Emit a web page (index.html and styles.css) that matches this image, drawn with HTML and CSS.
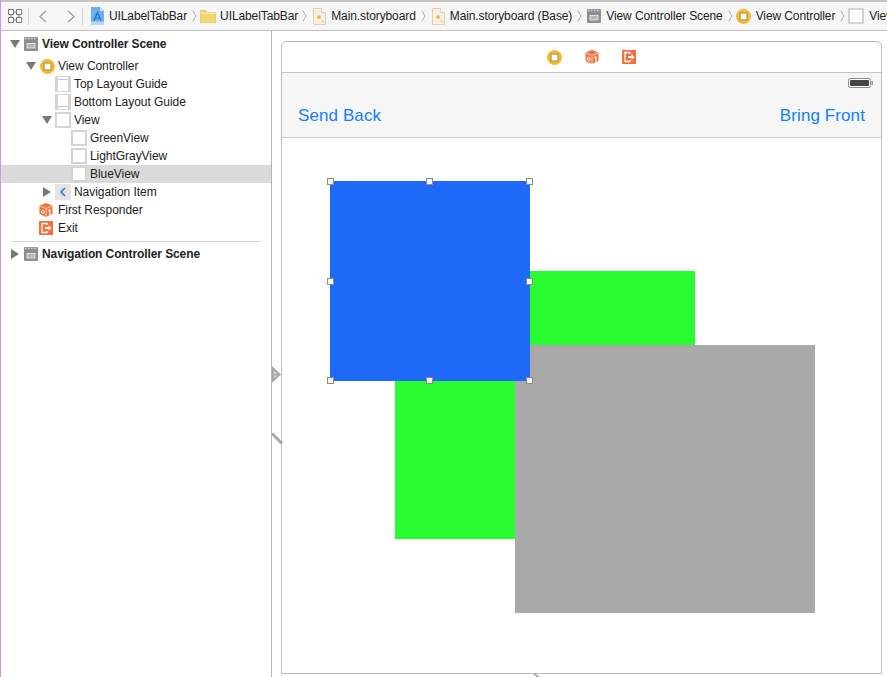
FILE: index.html
```html
<!DOCTYPE html>
<html lang="en">
<head>
    <meta charset="UTF-8">
    <title>Main.storyboard</title>
    <link rel="stylesheet" href="styles.css">
</head>
<body>

    <svg class="defs" width="0" height="0">
        <symbol id="i-scene" viewBox="0 0 14 14">
            <rect x="0" y="0" width="14" height="14" rx="1" fill="#8e8e8e"/>
            <path d="M1 1.500h1.500M4 1.500h1.500M7 1.500h1.500M10 1.500h1.500" stroke="#d8d8d8" stroke-width="1.400"/>
            <rect x="3" y="6.500" width="8" height="4.500" fill="#b5b5b5" stroke="#eee" stroke-width=".8"/>
        </symbol>
        <symbol id="i-vc" viewBox="0 0 14 14">
            <circle cx="7" cy="7" r="7" fill="#f5bb2c"/>
            <rect x="3.800" y="3.800" width="6.400" height="6.400" fill="#fff" stroke="#9c8a55" stroke-width=".9"/>
        </symbol>
        <symbol id="i-view" viewBox="0 0 16 16">
            <rect x="0" y="0" width="16" height="16" fill="#d4d4d4"/>
            <rect x="2" y="2" width="12" height="12" fill="#fff"/>
        </symbol>
        <symbol id="i-top" viewBox="0 0 16 16">
            <rect x="0" y="0" width="16" height="16" fill="#d4d4d4"/>
            <rect x="3" y="1" width="10" height="14" fill="#fff"/>
            <rect x="3" y="3" width="10" height="1" fill="#b8c4dc"/>
        </symbol>
        <symbol id="i-bottom" viewBox="0 0 16 16">
            <rect x="0" y="0" width="16" height="16" fill="#d4d4d4"/>
            <rect x="3" y="1" width="10" height="14" fill="#fff"/>
            <rect x="3" y="12" width="10" height="1" fill="#b8c4dc"/>
        </symbol>
        <symbol id="i-cube" viewBox="0 0 14 14">
            <path d="M7 0l6.500 2.500v8.500l-6.500 3-6.500-3v-8.500z" fill="#f4733c"/>
            <path d="M.5 2.800l6.500 2.700 6.500-2.700M7 5.500v8.500" stroke="#fcd5c2" stroke-width="1" fill="none"/>
            <path d="M9 7.800l1.800-.9v5" stroke="#fff" stroke-width="1.200" fill="none"/>
            <circle cx="3.800" cy="8.900" r="1.500" fill="none" stroke="#fff" stroke-width="1"/>
        </symbol>
        <symbol id="i-exit" viewBox="0 0 14 14">
            <rect width="14" height="14" fill="#f5703c"/>
            <path d="M8 4V2.500H3v9h5V10" fill="none" stroke="#fff" stroke-width="1.300"/>
            <path d="M6 6h3.500V4.200L12.500 7l-3 2.800V8H6z" fill="#fff"/>
        </symbol>
        <symbol id="i-file" viewBox="0 0 13 17">
            <path d="M.5.500h8l4 4v12H.5z" fill="#f6efe2" stroke="#dccfb8"/>
            <path d="M8.500.500v4h4" fill="#fff" stroke="#dccfb8"/>
            <circle cx="6" cy="9" r="1.800" fill="#eeb32a"/>
            <path d="M9 12.500l2 2" stroke="#e3a95a"/>
        </symbol>
        <symbol id="i-project" viewBox="0 0 13 18">
            <path d="M0 0h9l4 4v14H0z" fill="#6aaeee"/>
            <path d="M9 0v4h4" fill="#cfe4f8"/>
            <path d="M3 13.500l3.500-8 3.500 8M4 11h5" stroke="#1f6fd0" stroke-width="1.200" fill="none"/>
            <rect y="14.500" width="13" height="3.500" fill="#b4d6f5"/>
        </symbol>
        <symbol id="i-folder" viewBox="0 0 16 13">
            <path d="M0 1.500q0-1 1-1h4.500l1.500 2h8q1 0 1 1V12q0 1-1 1H1q-1 0-1-1z" fill="#f2d675" stroke="#d9b854" stroke-width=".6"/>
            <rect x=".5" y="2.500" width="15" height="1.200" fill="#fbeeb5"/>
        </symbol>
    </svg>

    <!-- JUMP BAR -->
    <div class="jumpbar">
        <svg class="grid-icon" width="14" height="14" viewBox="0 0 14 14">
            <path d="M.5.500h5v5h-5zM8.500.500h5v5h-5zM.5 8.500h5v5h-5zM8.500 8.500h5v5h-5zM5.500 3h3M5.500 11h3M3 5.500v3M11 5.500v3" fill="none" stroke="#777"/>
        </svg>
        <span class="bar-sep"></span>
        <svg class="nav-arrow" width="9" height="13" viewBox="0 0 9 13"><path d="M8 1L2 6.500 8 12" fill="none" stroke="#999" stroke-width="1.200"/></svg>
        <svg class="nav-arrow next" width="9" height="13" viewBox="0 0 9 13"><path d="M1 1l6 5.500L1 12" fill="none" stroke="#999" stroke-width="1.200"/></svg>
        <span class="bar-sep"></span>
        <div class="crumbs">
            <span class="crumb"><svg width="13" height="18"><use href="#i-project"/></svg>UILabelTabBar</span>
            <span class="crumb"><svg width="16" height="13"><use href="#i-folder"/></svg>UILabelTabBar</span>
            <span class="crumb"><svg width="13" height="17"><use href="#i-file"/></svg>Main.storyboard</span>
            <span class="crumb"><svg width="13" height="17"><use href="#i-file"/></svg>Main.storyboard (Base)</span>
            <span class="crumb"><svg width="14" height="14"><use href="#i-scene"/></svg>View Controller Scene</span>
            <span class="crumb"><svg width="15" height="15"><use href="#i-vc"/></svg>View Controller</span>
            <span class="crumb"><svg width="16" height="16"><use href="#i-view"/></svg>View</span>
        </div>
    </div>

    <div class="main">
        <!-- DOCUMENT OUTLINE -->
        <div class="outline">
            <div class="row scene"><span class="tri down"></span><svg width="14" height="14"><use href="#i-scene"/></svg>View Controller Scene</div>
            <div class="row level1"><span class="tri down"></span><svg width="15" height="15"><use href="#i-vc"/></svg>View Controller</div>
            <div class="row level2"><svg width="16" height="16"><use href="#i-top"/></svg>Top Layout Guide</div>
            <div class="row level2"><svg width="16" height="16"><use href="#i-bottom"/></svg>Bottom Layout Guide</div>
            <div class="row level2 has-tri"><span class="tri down"></span><svg width="16" height="16"><use href="#i-view"/></svg>View</div>
            <div class="row level3"><svg width="16" height="16"><use href="#i-view"/></svg>GreenView</div>
            <div class="row level3"><svg width="16" height="16"><use href="#i-view"/></svg>LightGrayView</div>
            <div class="row level3 selected"><svg width="16" height="16"><use href="#i-view"/></svg>BlueView</div>
            <div class="row level2 has-tri">
                <span class="tri right"></span>
                <svg width="16" height="16" viewBox="0 0 16 16"><rect width="16" height="16" fill="#e4e4e4"/><path d="M10 4L6 8l4 4" fill="none" stroke="#1a66e0" stroke-width="1.300"/></svg>
                Navigation Item
            </div>
            <div class="row level1 no-tri"><svg width="14" height="14"><use href="#i-cube"/></svg>First Responder</div>
            <div class="row level1 no-tri"><svg width="14" height="14"><use href="#i-exit"/></svg>Exit</div>
            <div class="outline-sep"></div>
            <div class="row scene"><span class="tri right"></span><svg width="14" height="14"><use href="#i-scene"/></svg>Navigation Controller Scene</div>
        </div>

        <!-- STORYBOARD CANVAS -->
        <div class="canvas">
            <svg class="segue-arrow" width="10" height="18" viewBox="0 0 10 18">
                <path d="M0 0l9 8.500L0 17z" fill="#a9a9a9"/>
                <path d="M2 5l3 2.500-3 0zM2 9.500h3L2 12z" fill="#e2e2e2"/>
            </svg>
            <span class="segue-line"></span>
            <span class="segue-stub"></span>
            <div class="scene-frame">
                <div class="dock">
                    <svg width="15" height="15"><use href="#i-vc"/></svg>
                    <svg width="14" height="14"><use href="#i-cube"/></svg>
                    <svg width="14" height="14"><use href="#i-exit"/></svg>
                </div>
                <div class="navbar">
                    <div class="status">
                        <svg width="25" height="10" viewBox="0 0 25 10">
                            <rect x=".5" y=".5" width="22" height="9" rx="2" fill="#fff" stroke="#888"/>
                            <rect x="2" y="2" width="19" height="6" rx="1" fill="#444"/>
                            <rect x="23.500" y="3" width="1.500" height="4" fill="#999"/>
                        </svg>
                    </div>
                    <div class="nav-buttons">
                        <span>Send Back</span>
                        <span>Bring Front</span>
                    </div>
                </div>
                <div class="content">
                    <div class="box green"></div>
                    <div class="box gray"></div>
                    <div class="box blue">
                        <i class="handle tl"></i><i class="handle tc"></i><i class="handle tr"></i>
                        <i class="handle ml"></i><i class="handle mr"></i>
                        <i class="handle bl"></i><i class="handle bc"></i><i class="handle br"></i>
                    </div>
                </div>
            </div>
        </div>
    </div>

</body>
</html>
```

FILE: styles.css
```css
* {
    margin: 0;
    padding: 0;
    box-sizing: border-box;
    font-family: "Liberation Sans", Arial, sans-serif;
}

body {
    width: 887px;
    height: 677px;
    background: #fff;
    overflow: hidden;
    border-left: 1px solid #e08fe0;
    color: #222;
    font-size: 12px;
}

.defs { position: absolute; }

svg { flex: none; display: block; }

/* JUMP BAR */
.jumpbar {
    height: 31px;
    display: flex;
    align-items: center;
    background: #f6f6f6;
    border-top: 2px solid #c4c4c4;
    border-bottom: 1px solid #c0c0c0;
    padding-left: 7px;
    white-space: nowrap;
    overflow: hidden;
}

.bar-sep {
    flex: none;
    width: 1px;
    height: 17px;
    background: #cfcfcf;
}

.grid-icon { margin-right: 6px; }

.nav-arrow { margin-left: 9px; }

.nav-arrow.next { margin-left: 20px; margin-right: 6px; }

.crumbs {
    flex: none;
    display: flex;
    align-items: center;
    margin-left: 8px;
    letter-spacing: -0.1px;
}

.crumb {
    display: flex;
    align-items: center;
    gap: 5px;
}

.crumb::after {
    content: "";
    width: 7px;
    height: 7px;
    margin: 0 4px 0 -3px;
    border-top: 1px solid #aaa;
    border-right: 1px solid #aaa;
    transform: scaleX(.6) rotate(45deg);
}

.crumb:nth-child(1)::after { margin-right: 3px; }

.crumb:nth-child(2) { gap: 4px; }

.crumb:nth-child(2)::after { margin-right: 6px; }

.crumb:nth-child(3)::after { margin-right: 6px; }

.crumb:nth-child(4)::after { margin-right: 5px; }

.crumb:nth-child(5)::after { margin-right: 3px; }

.crumb:nth-child(6)::after { margin-right: 3px; }

.crumb:last-child::after { display: none; }

.main {
    height: 646px;
    display: flex;
}

/* OUTLINE */
.outline {
    width: 271px;
    flex: none;
    border-right: 1px solid #b4b4b4;
    padding-top: 4px;
    letter-spacing: -0.05px;
}

.row {
    height: 18px;
    display: flex;
    align-items: center;
    gap: 3px;
    white-space: nowrap;
}

.scene {
    height: 18px;
    padding-left: 9px;
    font-weight: bold;
    gap: 4px;
    letter-spacing: -0.1px;
}

.scene .tri.right { margin-right: 1px; }

.level1 { padding-left: 25px; }

.level1 .tri { margin-right: 1px; }

.level1.no-tri { padding-left: 38px; gap: 5px; }

.level2 { padding-left: 54px; }

.level2.has-tri { padding-left: 41px; }

.level2.has-tri .tri.right { margin-right: 1px; }

.level3 { padding-left: 70px; }

.selected { background: #dadada; }

.tri {
    width: 0;
    height: 0;
    flex: none;
}

.tri.down {
    border-left: 5px solid transparent;
    border-right: 5px solid transparent;
    border-top: 8px solid #777;
}

.tri.right {
    margin-left: 1px;
    border-top: 5px solid transparent;
    border-bottom: 5px solid transparent;
    border-left: 8px solid #777;
}

.scene:first-child { margin-bottom: 4px; }

.outline-sep {
    height: 1px;
    margin: 4px 10px 3px;
    background: #d4d4d4;
}

/* CANVAS */
.canvas {
    flex: 1;
    position: relative;
    padding: 10px 4px 0 9px;
}

.segue-arrow {
    position: absolute;
    left: 0;
    top: 335px;
}

.segue-line {
    position: absolute;
    left: -2px;
    top: 406px;
    width: 14px;
    height: 3px;
    background: #a9a9a9;
    transform: rotate(45deg);
}

.segue-stub {
    position: absolute;
    left: 261px;
    top: 644px;
    width: 8px;
    height: 2px;
    background: #a9a9a9;
    transform: rotate(40deg);
}

.scene-frame {
    width: 601px;
    height: 633px;
    border: 1px solid #bdbdbd;
    border-radius: 5px 5px 0 0;
    display: flex;
    flex-direction: column;
}

.dock {
    height: 31px;
    flex: none;
    display: flex;
    align-items: center;
    justify-content: center;
    gap: 23px;
    padding-left: 19px;
    border-bottom: 1px solid #c4c4c4;
}

.navbar {
    height: 65px;
    flex: none;
    background: #f6f6f6;
    border-bottom: 1px solid #d0d0d0;
}

.status {
    height: 20px;
    display: flex;
    justify-content: flex-end;
    align-items: center;
    padding-right: 8px;
}

.nav-buttons {
    display: flex;
    justify-content: space-between;
    padding: 13px 16px 0;
    color: #147efb;
    font-size: 17px;
    letter-spacing: 0.1px;
}

.content {
    flex: 1;
    position: relative;
}

.box { position: absolute; }

.blue {
    left: 48px;
    top: 43px;
    width: 200px;
    height: 200px;
    background: #1e69f8;
}

.green {
    left: 113px;
    top: 133px;
    width: 300px;
    height: 268px;
    background: #29fd2f;
}

.gray {
    left: 233px;
    top: 207px;
    width: 300px;
    height: 268px;
    background: #a9a9a9;
}

.handle {
    position: absolute;
    width: 7px;
    height: 7px;
    background: #f4f6fa;
    border: 1px solid #8c8c8c;
}

.tl { left: -3px; top: -3px; }
.tc { left: 96px; top: -3px; }
.tr { right: -3px; top: -3px; }
.ml { left: -3px; top: 97px; }
.mr { right: -3px; top: 97px; }
.bl { left: -3px; bottom: -3px; }
.bc { left: 96px; bottom: -3px; }
.br { right: -3px; bottom: -3px; }
```
